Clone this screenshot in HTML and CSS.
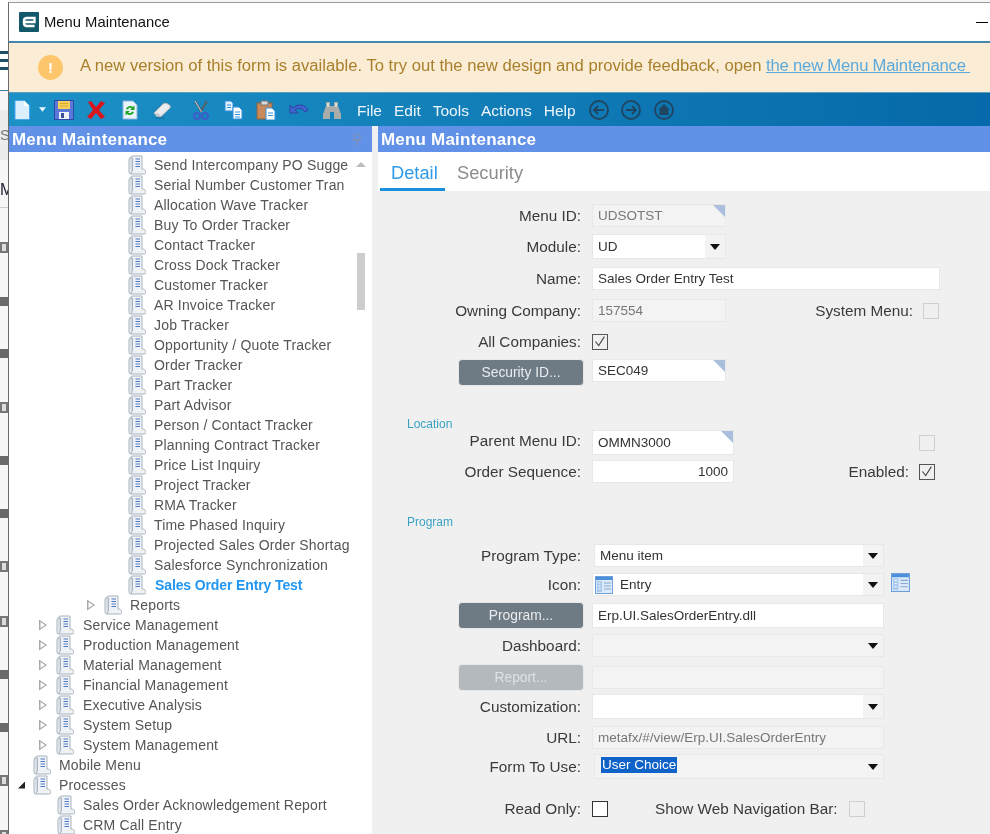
FILE: index.html
```html
<!DOCTYPE html>
<html lang="en">
<head>
<meta charset="utf-8">
<title>Menu Maintenance</title>
<link rel="stylesheet" href="styles.css">
</head>
<body>
<svg class="defs" width="0" height="0" aria-hidden="true">
  <symbol id="book" viewBox="0 0 18 20">
    <path d="M3 2Q3 1 5 1H14V14C16 14 18 15 18 17S16 19 14 19H3Q1 19 1 17V4Z" fill="#eef2f6" stroke="#a9b3bd"/>
    <path d="M1.5 3H4.5V15L3 19" fill="#d5dce2" stroke="#a9b3bd"/>
    <path d="M7.5 4H12M7.5 6.5H12M7.5 9H12M7.5 11.5H12" stroke="#4f78c4" fill="none"/>
  </symbol>
  <symbol id="entry" viewBox="0 0 18 18">
    <rect x=".5" y=".5" width="17" height="17" fill="#dbe9fa" stroke="#6f9fd8"/>
    <rect x="1" y="1" width="16" height="3" fill="#4c8fdc"/>
    <rect x="2" y="5" width="5" height="11" fill="#a9c8ee"/>
    <path d="M9 7H16M9 10H16M9 13H16" stroke="#8aa9cf"/>
    <path d="M3.5 7H5.5M3.5 10H5.5M3.5 13H5.5" stroke="#fff"/>
  </symbol>
  <symbol id="corner" viewBox="0 0 12 12"><path d="M0 0H12V12Z" fill="#a9bfdc"/></symbol>
  <symbol id="tick" viewBox="0 0 16 16"><path d="M3 8L7 13L14 2" fill="none" stroke="#444" stroke-width="1.300"/></symbol>
</svg>

<div class="behind" aria-hidden="true">
  <div class="burger"><i></i><i></i><i></i></div>
  <div class="band">S</div>
  <div class="letter">M</div>
  <div class="bits">
    <i class="bit bit-e"></i><i class="bit"></i><i class="bit"></i><i class="bit bit-e"></i><i class="bit"></i><i class="bit"></i>
    <i class="bit bit-e"></i><i class="bit bit-e"></i><i class="bit"></i><i class="bit"></i><i class="bit bit-e"></i><i class="bit bit-e"></i>
  </div>
</div>

<div class="window">
  <header class="titlebar">
    <svg class="logo" viewBox="0 0 20 20"><rect width="20" height="20" rx="1" fill="#12586b"/><path d="M6 10H15.500V6H8Q5 6 5 9V11Q5 14 8 14H15.500" fill="none" stroke="#fff" stroke-width="2.400"/></svg>
    <span class="title">Menu Maintenance</span>
    <span class="minimize"></span>
  </header>

  <div class="banner">
    <span class="warn">!</span>
    <span class="banner-text">A new version of this form is available. To try out the new design and provide feedback, open <a href="#">the new Menu Maintenance&nbsp;</a></span>
  </div>

  <nav class="toolbar">
    <div class="tools">
      <svg viewBox="0 0 20 20"><path d="M3 .5H12L17.5 6V19.5H3Z" fill="#dcefff" stroke="#4aa8ea"/><path d="M12 .5V6H17.5Z" fill="#fff"/></svg>
      <svg class="caret" viewBox="0 0 8 5"><path d="M0 0H8L4 5Z" fill="#e8f3fb"/></svg>
      <svg viewBox="0 0 20 20"><rect x=".5" y=".5" width="19" height="19" fill="#5a78d8" stroke="#2d4aa8"/><rect x="4" y="1" width="12" height="8" fill="#f7cf5a"/><path d="M6 3.5H14M6 6H14" stroke="#d9a52e"/><rect x="5" y="12" width="10" height="7" fill="#eef1f6"/><rect x="7" y="13" width="3" height="5" fill="#3b4f99"/></svg>
      <svg viewBox="0 0 20 20"><path d="M2 2L5 1L10 7L15 1L19 3L13 10L19 17L15 19L10 13L5 19L1 17L7 10Z" fill="#d8141c"/></svg>
      <svg viewBox="0 0 20 20"><path d="M3 1H13L17 5V19H3Z" fill="#e8f3fb" stroke="#8fb6d8"/><path d="M6 9C7 6 11 5 13 7L14.5 5.5V10H10L11.8 8.4C10.5 7.4 8.5 7.8 8 9.5ZM14 12C13 15 9 16 7 14L5.5 15.5V11H10L8.2 12.6C9.5 13.6 11.5 13.2 12 11.5Z" fill="#1ca51f"/></svg>
      <svg viewBox="0 0 20 20"><path d="M2 13L11 4Q13 2.500 15 3.500L18 5.500Q19 7 17.500 8.500L9 16.500L5 16.500Z" fill="#e9ecef" stroke="#a9adb2"/><path d="M2 13L5 16.500L9 16.500L7 13.500Z" fill="#c7cbd0"/><path d="M4 18H13" stroke="#1a6c9d"/></svg>
      <svg viewBox="0 0 20 20"><path d="M4 1L10.500 12M16 1L9.500 12" stroke="#5a5f66" stroke-width="2" fill="none"/><path d="M4 1L10.500 12" stroke="#c9ccd0" fill="none"/><circle cx="6" cy="16" r="3" fill="none" stroke="#3b5fc8" stroke-width="2"/><circle cx="14" cy="16" r="3" fill="none" stroke="#3b5fc8" stroke-width="2"/></svg>
      <svg viewBox="0 0 20 20"><path d="M1 1H7L9 3V11H1Z" fill="#e2f0fd" stroke="#2f8fe0"/><path d="M9 7H15L18 10V19H9Z" fill="#fff" stroke="#2f8fe0"/><path d="M11 12H16M11 14.500H16M11 17H16M3 5H7M3 7.500H7" stroke="#2f8fe0"/></svg>
      <svg viewBox="0 0 20 20"><rect x="1" y="3" width="15" height="16" fill="#c88a5a" stroke="#8a6040"/><rect x="5" y="1" width="7" height="4" fill="#d7dbe0" stroke="#777"/><path d="M10 8H16L19 11V20H10Z" fill="#fff" stroke="#2f8fe0"/><path d="M12 13H17M12 15.500H17" stroke="#2f8fe0"/></svg>
      <svg viewBox="0 0 20 20"><path d="M1 5V13H9L6 10C9 7.500 13 8 16 12L19 10C16 4.500 9 3 4 8Z" fill="#3f63cf" stroke="#2b469f"/></svg>
      <svg viewBox="0 0 20 20"><path d="M4 2H8V6H12V2H16V6L19 14V19H12V12H8V19H1V14L4 6Z" fill="#a9aca9"/><path d="M5 3H7V7H5ZM13 3H15V7H13Z" fill="#d8dad8"/></svg>
    </div>
    <div class="menus"><span>File</span><span>Edit</span><span>Tools</span><span>Actions</span><span>Help</span></div>
    <div class="navs">
      <svg viewBox="0 0 20 20"><circle cx="10" cy="10" r="9" class="nav-ring"/><path d="M15 10H5M9 6L5 10L9 14" class="nav-ring"/></svg>
      <svg viewBox="0 0 20 20"><circle cx="10" cy="10" r="9" class="nav-ring"/><path d="M5 10H15M11 6L15 10L11 14" class="nav-ring"/></svg>
      <svg viewBox="0 0 20 20"><circle cx="10" cy="10" r="9" class="nav-ring"/><path d="M10 4L16 10H14.500V15H5.500V10H4Z" fill="#1f4560"/></svg>
    </div>
  </nav>

  <main class="panes">
    <aside class="tree-pane">
      <div class="pane-head pane-head-left">
        <span>Menu Maintenance</span>
        <svg class="pin" viewBox="0 0 10 12"><path d="M2 .5H8V6H2ZM1 6.500H9M5 7V12" fill="none" stroke="#8290b0"/></svg>
      </div>
      <div class="tree">
        <div class="scroll-up"></div>
        <div class="scroll-thumb"></div>
        <div class="node lv5"><svg class="book"><use href="#book"/></svg>Send Intercompany PO Sugge</div>
        <div class="node lv5"><svg class="book"><use href="#book"/></svg>Serial Number Customer Tran</div>
        <div class="node lv5"><svg class="book"><use href="#book"/></svg>Allocation Wave Tracker</div>
        <div class="node lv5"><svg class="book"><use href="#book"/></svg>Buy To Order Tracker</div>
        <div class="node lv5"><svg class="book"><use href="#book"/></svg>Contact Tracker</div>
        <div class="node lv5"><svg class="book"><use href="#book"/></svg>Cross Dock Tracker</div>
        <div class="node lv5"><svg class="book"><use href="#book"/></svg>Customer Tracker</div>
        <div class="node lv5"><svg class="book"><use href="#book"/></svg>AR Invoice Tracker</div>
        <div class="node lv5"><svg class="book"><use href="#book"/></svg>Job Tracker</div>
        <div class="node lv5"><svg class="book"><use href="#book"/></svg>Opportunity / Quote Tracker</div>
        <div class="node lv5"><svg class="book"><use href="#book"/></svg>Order Tracker</div>
        <div class="node lv5"><svg class="book"><use href="#book"/></svg>Part Tracker</div>
        <div class="node lv5"><svg class="book"><use href="#book"/></svg>Part Advisor</div>
        <div class="node lv5"><svg class="book"><use href="#book"/></svg>Person / Contact Tracker</div>
        <div class="node lv5"><svg class="book"><use href="#book"/></svg>Planning Contract Tracker</div>
        <div class="node lv5"><svg class="book"><use href="#book"/></svg>Price List Inquiry</div>
        <div class="node lv5"><svg class="book"><use href="#book"/></svg>Project Tracker</div>
        <div class="node lv5"><svg class="book"><use href="#book"/></svg>RMA Tracker</div>
        <div class="node lv5"><svg class="book"><use href="#book"/></svg>Time Phased Inquiry</div>
        <div class="node lv5"><svg class="book"><use href="#book"/></svg>Projected Sales Order Shortag</div>
        <div class="node lv5"><svg class="book"><use href="#book"/></svg>Salesforce Synchronization</div>
        <div class="node lv5 current"><svg class="book"><use href="#book"/></svg>Sales Order Entry Test</div>
        <div class="node lv4"><i class="twist"></i><svg class="book"><use href="#book"/></svg>Reports</div>
        <div class="node lv3"><i class="twist"></i><svg class="book"><use href="#book"/></svg>Service Management</div>
        <div class="node lv3"><i class="twist"></i><svg class="book"><use href="#book"/></svg>Production Management</div>
        <div class="node lv3"><i class="twist"></i><svg class="book"><use href="#book"/></svg>Material Management</div>
        <div class="node lv3"><i class="twist"></i><svg class="book"><use href="#book"/></svg>Financial Management</div>
        <div class="node lv3"><i class="twist"></i><svg class="book"><use href="#book"/></svg>Executive Analysis</div>
        <div class="node lv3"><i class="twist"></i><svg class="book"><use href="#book"/></svg>System Setup</div>
        <div class="node lv3"><i class="twist"></i><svg class="book"><use href="#book"/></svg>System Management</div>
        <div class="node lv2"><svg class="book"><use href="#book"/></svg>Mobile Menu</div>
        <div class="node lv1"><i class="twist-open"></i><svg class="book"><use href="#book"/></svg>Processes</div>
        <div class="node lv2b"><svg class="book"><use href="#book"/></svg>Sales Order Acknowledgement Report</div>
        <div class="node lv2b"><svg class="book"><use href="#book"/></svg>CRM Call Entry</div>
      </div>
    </aside>

    <section class="detail-pane">
      <div class="pane-head pane-head-right">Menu Maintenance</div>
      <div class="tabs">
        <span class="tab tab-on">Detail</span>
        <span class="tab">Security</span>
      </div>
      <form class="form">
        <div class="row"><label class="lbl">Menu ID:</label><span class="field w134 off keyed">UDSOTST<svg class="corner"><use href="#corner"/></svg></span></div>
        <div class="row"><label class="lbl">Module:</label><span class="field w134 combo tall">UD<i class="drop"></i></span></div>
        <div class="row"><label class="lbl">Name:</label><span class="field w348">Sales Order Entry Test</span></div>
        <div class="row"><label class="lbl">Owning Company:</label><span class="field w134 off">157554</span>
          <span class="side side-system"><label class="lbl-free">System Menu:</label><i class="check dim"></i></span></div>
        <div class="row"><label class="lbl">All Companies:</label><i class="check"><svg><use href="#tick"/></svg></i></div>
        <div class="row row-top"><button type="button" class="btn">Security ID...</button><span class="field w134 keyed">SEC049<svg class="corner"><use href="#corner"/></svg></span></div>
        <div class="group">Location</div>
        <div class="row"><label class="lbl lbl-up">Parent Menu ID:</label><span class="field w142 keyed tall">OMMN3000<svg class="corner"><use href="#corner"/></svg></span>
          <span class="side side-enabled"><i class="check dim"></i></span></div>
        <div class="row"><label class="lbl">Order Sequence:</label><span class="field w142 num">1000</span>
          <span class="side side-enabled"><label class="lbl-free">Enabled:</label><i class="check"><svg><use href="#tick"/></svg></i></span></div>
        <div class="group">Program</div>
        <div class="row"><label class="lbl">Program Type:</label><span class="field w290 combo nudge">Menu item<i class="drop"></i></span></div>
        <div class="row"><label class="lbl">Icon:</label><span class="field w292 combo icon-field"><svg class="entry"><use href="#entry"/></svg>Entry<i class="drop"></i></span><svg class="entry-btn"><use href="#entry"/></svg></div>
        <div class="row"><button type="button" class="btn">Program...</button><span class="field w292 tall">Erp.UI.SalesOrderEntry.dll</span></div>
        <div class="row"><label class="lbl">Dashboard:</label><span class="field w292 combo off"><i class="drop"></i></span></div>
        <div class="row"><button type="button" class="btn btn-off">Report...</button><span class="field w292 off"></span></div>
        <div class="row"><label class="lbl">Customization:</label><span class="field w292 combo tall"><i class="drop"></i></span></div>
        <div class="row"><label class="lbl">URL:</label><span class="field w292 off">metafx/#/view/Erp.UI.SalesOrderEntry</span></div>
        <div class="row"><label class="lbl">Form To Use:</label><span class="field w290 combo off nudge tall"><span class="selected">User Choice</span><i class="drop"></i></span></div>
        <div class="row"><label class="lbl">Read Only:</label><i class="check plain"></i>
          <label class="lbl-free web-label">Show Web Navigation Bar:</label><i class="check dim"></i></div>
      </form>
    </section>
  </main>
</div>
</body>
</html>
```
FILE: styles.css
```css
* { box-sizing: border-box; }
html, body { margin: 0; height: 100%; }
body {
  width: 990px;
  height: 834px;
  overflow: hidden;
  display: flex;
  background: #f6f6f6;
  font-family: "Liberation Sans", Arial, sans-serif;
  color: #333;
}
.defs { position: absolute; }

/* sliver of the application behind the window */
.behind { width: 8px; flex: none; overflow: hidden; color: #444; filter: blur(.4px); }
.burger { height: 91px; padding-top: 51px; border-bottom: 1px solid #3d7f9e; background: #fff; }
.burger i { display: block; height: 3px; margin-bottom: 5px; background: #1f5068; }
.band { height: 50px; margin-top: 19px; background: #ececec; font-size: 15px; line-height: 50px; color: #777; }
.letter { height: 48px; padding-top: 20px; border-bottom: 1px solid #ccc; font-size: 16px; line-height: 20px; color: #223; }
.bits { display: flex; flex-direction: column; gap: 43.500px; padding-top: 34px; }
.bit { display: block; width: 8px; height: 9px; background: #6a6a6a; }
.bit-e { height: 11px; border: 2px solid #777; background: #ddd; }

/* window: the reference is a slightly soft, rescaled capture */
.window {
  flex: 1;
  min-width: 0;
  margin-top: 2px;
  border-top: 1px solid #9a9a9a;
  border-left: 1px solid #6a6a6a;
  display: flex;
  flex-direction: column;
  background: #fff;
  filter: blur(.35px);
}
.titlebar { height: 38px; flex: none; display: flex; align-items: center; padding-left: 10px; }
.logo { width: 20px; height: 20px; }
.title { margin-left: 5px; font-size: 14.800px; color: #111; }
.minimize { width: 12px; height: 1px; margin-left: auto; margin-right: 2px; background: #000; }

.banner {
  height: 52px;
  flex: none;
  display: flex;
  align-items: center;
  padding-left: 29px;
  border-top: 2px solid #4286ab;
  border-bottom: 1px solid #5c9dbb;
  background: #fbecd5;
  color: #a8802c;
  font-size: 16.650px;
}
.warn {
  width: 25px;
  height: 25px;
  flex: none;
  border-radius: 50%;
  background: #fdc66c;
  color: #fff;
  font-weight: bold;
  font-size: 15px;
  line-height: 25px;
  text-align: center;
}
.banner-text { margin-left: 17px; margin-bottom: 4px; white-space: nowrap; }
.banner-text a { color: #5aa9dc; letter-spacing: -.2px; }

.toolbar {
  height: 33px;
  flex: none;
  display: flex;
  align-items: center;
  padding-left: 3px;
  background: linear-gradient(90deg, #1c91c6, #0669a9);
  color: #eef6fb;
  font-size: 15.500px;
}
.tools {
  display: grid;
  grid-template-columns: 20px 20px 24px 40px 28px 36px 42px 24px 40px 26px 40px;
  justify-items: center;
  align-items: center;
}
.tools svg { width: 20px; height: 20px; }
.tools .caret { width: 7px; height: 5px; }
.menus { display: flex; gap: 12px; margin-left: 5px; padding-top: 2px; }
.navs { display: flex; gap: 12.500px; margin-left: 13px; }
.navs svg { width: 20px; height: 20px; }
.nav-ring { fill: none; stroke: #1f4560; stroke-width: 1.800; }

.panes { flex: 1; min-height: 0; display: flex; }
.tree-pane { width: 363px; flex: none; display: flex; flex-direction: column; overflow: hidden; }
.pane-head {
  height: 26px;
  flex: none;
  display: flex;
  align-items: center;
  padding-top: 1px;
  background: #6291e8;
  color: #fff;
  font-weight: bold;
  font-size: 17px;
  letter-spacing: .2px;
}
.pane-head-left { padding-left: 3px; justify-content: space-between; }
.pin { width: 10px; height: 12px; margin-right: 10px; }
.tree { position: relative; padding-top: 3px; flex: 1; overflow: hidden; }
.scroll-up {
  position: absolute; left: 347px; top: 10px;
  border: 5px solid transparent; border-top: 0; border-bottom: 5px solid #bdbdbd;
}
.scroll-thumb { position: absolute; left: 348px; top: 101px; width: 8px; height: 57px; background: #cdcdcd; }
.node {
  height: 20px;
  display: flex;
  align-items: center;
  white-space: nowrap;
  font-size: 14px;
  letter-spacing: .17px;
  color: #555;
}
.book { width: 18px; height: 20px; flex: none; margin-right: 8px; }
.lv5 { padding-left: 119px; }
.lv4 { padding-left: 78px; }
.lv3 { padding-left: 30px; }
.lv3 .book { margin-right: 9px; }
.lv2 { padding-left: 24px; }
.lv2b { padding-left: 48px; }
.lv1 { padding-left: 9px; }
.current { color: #2196f3; font-weight: bold; letter-spacing: -.12px; }
.current .book { margin-right: 9px; }
.twist {
  width: 8px; height: 11px; flex: none; margin-right: 9px;
  background: #a9a9a9;
  clip-path: polygon(0 0, 100% 50%, 0 100%, 0 0, 1.500px 2.500px, 1.500px 8.500px, 6px 5.500px, 1.500px 2.500px);
}
.twist-open {
  width: 7px; height: 7px; flex: none; margin-right: 8px;
  background: #222;
  clip-path: polygon(100% 0, 100% 100%, 0 100%);
}

.detail-pane { flex: 1; min-width: 0; display: flex; flex-direction: column; background: #f0f0f0; }
.pane-head-right { margin-left: 6px; padding-left: 3px; }
.tabs { height: 39px; flex: none; margin-left: 6px; display: flex; align-items: flex-end; background: #fff; color: #8c8c8c; font-size: 18.300px; }
.tab { height: 36px; line-height: 35px; margin-left: 11px; padding: 0; }
.tab-on {
  width: 65px;
  margin-left: 2px;
  margin-right: 1px;
  padding-left: 11px;
  color: #2f9be8;
  border-bottom: 3px solid #1a8fe0;
}

.form {
  flex: 1;
  padding-top: 13px;
  display: grid;
  align-content: start;
  align-items: start;
  grid-template-rows: 30px 33px 32px 34px 26px 58px 13px 30px 55px 29px 29px 29px 32px 30px 30px 32px 28px 46px 34px;
  font-size: 15.300px;
  color: #3a3a3a;
}
.row { display: flex; align-items: center; }
.row-top { align-items: flex-start; }
.lbl { width: 209px; flex: none; margin-right: 11px; text-align: right; white-space: nowrap; }
.lbl-up { margin-bottom: 3px; }
.lbl-free { white-space: nowrap; }
.group { padding-left: 35px; color: #3aa3c4; font-size: 12px; line-height: 14px; }

.field {
  position: relative;
  height: 23px;
  flex: none;
  display: flex;
  align-items: center;
  padding: 0 5px;
  border: 1px solid #e8e8e8;
  background: #fff;
  color: #333;
  font-size: 13.500px;
  white-space: nowrap;
}
.tall { height: 25px; }
.off { background: #f3f3f3; color: #777; }
.w134 { width: 134px; }
.w142 { width: 142px; }
.w290 { width: 290px; }
.w292 { width: 292px; }
.w348 { width: 348px; }
.num { justify-content: flex-end; }
.nudge { margin-left: 2px; }
.corner { position: absolute; right: 0; top: 0; width: 12px; height: 12px; }
.combo { padding-right: 22px; }
.drop {
  position: absolute; right: 0; top: 0; bottom: 0; width: 20px;
  background: #f3f3f3;
}
.drop::after {
  content: "";
  position: absolute; left: 5px; top: 50%; margin-top: -3px;
  border: 5px solid transparent; border-top: 6px solid #111; border-bottom: 0;
}
.off .drop { background: transparent; }
.icon-field { padding-left: 2px; }
.entry { width: 18px; height: 18px; margin-right: 7px; }
.entry-btn { width: 19px; height: 19px; margin-left: 7px; align-self: flex-start; }
.selected { margin-left: 1px; margin-top: -3px; padding: 0 1px; background: #0f62c8; color: #fff; line-height: 16px; }

.check {
  display: block;
  width: 16px;
  height: 16px;
  flex: none;
  border: 1.500px solid #555;
  background: transparent;
}
.check svg { display: block; width: 13px; height: 13px; }
.dim { border-color: #cfcfcf; }
.plain { border-color: #333; background: #fff; }
.side { margin-left: auto; display: flex; align-items: center; gap: 10px; }
.side-system { margin-right: 51px; }
.side-enabled { margin-right: 55px; }
.web-label { margin-left: 47px; margin-right: 11px; }

.btn {
  width: 126px;
  height: 27px;
  flex: none;
  margin-left: 86px;
  margin-right: 8px;
  border: 1px solid #e8e8e8;
  border-radius: 4px;
  background: #6f7b84;
  color: #e9ecee;
  font: 13.800px "Liberation Sans", Arial, sans-serif;
}
.btn-off { background: #b3b9bd; color: #dfe2e4; }
```
